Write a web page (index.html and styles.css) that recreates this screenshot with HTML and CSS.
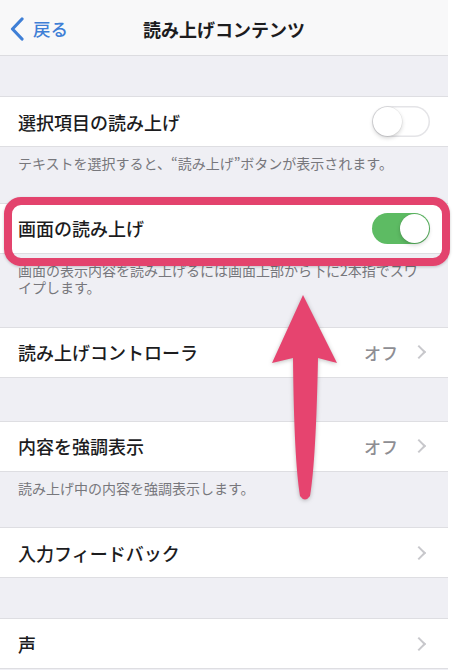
FILE: index.html
```html
<!DOCTYPE html>
<html lang="ja">
<head>
  <meta charset="UTF-8" />
  <meta name="viewport" content="width=device-width, initial-scale=1.0" />
  <title>読み上げコンテンツ</title>
  <link rel="stylesheet" href="styles.css">
</head>
<body>
  <div class="screen">
    <header class="nav">
      <a href="#" class="back">
        <svg width="14" height="24" viewBox="0 0 14 24"><path d="M12 2 L2.5 12 L12 22" fill="none" stroke="currentColor" stroke-width="3.2" stroke-linecap="round" stroke-linejoin="round"/></svg>
        戻る
      </a>
      <h1>読み上げコンテンツ</h1>
      <span></span>
    </header>

    <div class="group first">
      <div class="row">
        <span class="label">選択項目の読み上げ</span>
        <span class="switch"></span>
      </div>
    </div>
    <p class="footer">テキストを選択すると、“読み上げ”ボタンが表示されます。</p>

    <div class="group">
      <div class="row">
        <span class="label">画面の読み上げ</span>
        <span class="switch on"></span>
      </div>
    </div>
    <p class="footer">画面の表示内容を読み上げるには画面上部から下に2本指でスワイプします。</p>

    <div class="group">
      <div class="row">
        <span class="label">読み上げコントローラ</span>
        <span class="value">オフ<i class="chev"></i></span>
      </div>
    </div>

    <div class="group spaced">
      <div class="row">
        <span class="label">内容を強調表示</span>
        <span class="value">オフ<i class="chev"></i></span>
      </div>
    </div>
    <p class="footer">読み上げ中の内容を強調表示します。</p>

    <div class="group">
      <div class="row">
        <span class="label">入力フィードバック</span>
        <span class="value"><i class="chev"></i></span>
      </div>
    </div>

    <div class="group spaced last">
      <div class="row">
        <span class="label">声</span>
        <span class="value"><i class="chev"></i></span>
      </div>
    </div>
  </div>

  <div class="highlight"></div>
  <svg class="arrow" viewBox="0 0 457 670" width="457" height="670">
    <path d="M303 295 L337 363 L318 358 Q316 460 310 496 Q305 503 300 496 Q294 460 293 358 L272 363 Z" fill="#e6446f"/>
  </svg>
</body>
</html>
```

FILE: styles.css
```css
body {
  margin: 0;
  background: white;
  font-family: "Noto Sans CJK JP", "Noto Sans", sans-serif;
  color: #1c1c1e;
  overflow: hidden;
}

.screen {
  width: 448px;
  height: 670px;
  background: #efeff4;
}

.nav {
  height: 56px;
  display: grid;
  grid-template-columns: 1fr auto 1fr;
  align-items: center;
  padding-top: 2px;
  box-sizing: border-box;
  background: #f8f8f9;
  border-bottom: 1px solid #dcdce0;
}

.nav h1 {
  margin: 0;
  font-size: 18px;
  font-weight: bold;
}

.back {
  display: flex;
  align-items: center;
  gap: 9px;
  padding-left: 10px;
  color: #3f7fd6;
  font-size: 17.5px;
  font-weight: 500;
  text-decoration: none;
}

.group {
  background: white;
  border-top: 1px solid #dedee2;
  border-bottom: 1px solid #dedee2;
}

.group.first {
  margin-top: 40px;
}

.group.spaced {
  margin-top: 43px;
}

.group.last {
  margin-top: 40px;
}

.row {
  height: 49px;
  padding: 0 18px;
  display: flex;
  align-items: center;
  justify-content: space-between;
}

.label {
  font-size: 18px;
  font-weight: 500;
}

.value {
  display: flex;
  align-items: center;
  gap: 16px;
  padding-right: 4px;
  color: #8e8e93;
  font-size: 17px;
  font-weight: 500;
}

.chev {
  width: 8px;
  height: 8px;
  border-top: 2px solid #c8c8cc;
  border-right: 2px solid #c8c8cc;
  transform: rotate(45deg);
  margin-right: 2px;
}

.footer {
  margin: 0 0 30px;
  padding: 8px 24px 0 18px;
  font-size: 14px;
  line-height: 17.5px;
  color: #77777c;
}

.switch {
  position: relative;
  width: 58px;
  height: 31px;
  border-radius: 16px;
  background: white;
  box-shadow: inset 0 0 0 1.5px #e4e4e7;
}

.switch::after {
  content: "";
  position: absolute;
  top: 1px;
  left: 1px;
  width: 29px;
  height: 29px;
  border-radius: 50%;
  background: white;
  box-shadow: 0 2px 4px rgba(0, 0, 0, 0.18), 0 0 0 0.5px rgba(0, 0, 0, 0.08);
}

.switch.on {
  background: #5dbb63;
  box-shadow: none;
}

.switch.on::after {
  left: 28px;
}

.highlight {
  position: absolute;
  left: 4px;
  top: 197px;
  width: 446px;
  height: 69px;
  box-sizing: border-box;
  border: 8px solid #e3436d;
  border-radius: 17px;
  box-shadow: 0 1px 3px rgba(0, 0, 0, 0.2);
}

.arrow {
  position: absolute;
  left: 0;
  top: 0;
  pointer-events: none;
  filter: drop-shadow(0 1px 2px rgba(0, 0, 0, 0.25));
}
```
